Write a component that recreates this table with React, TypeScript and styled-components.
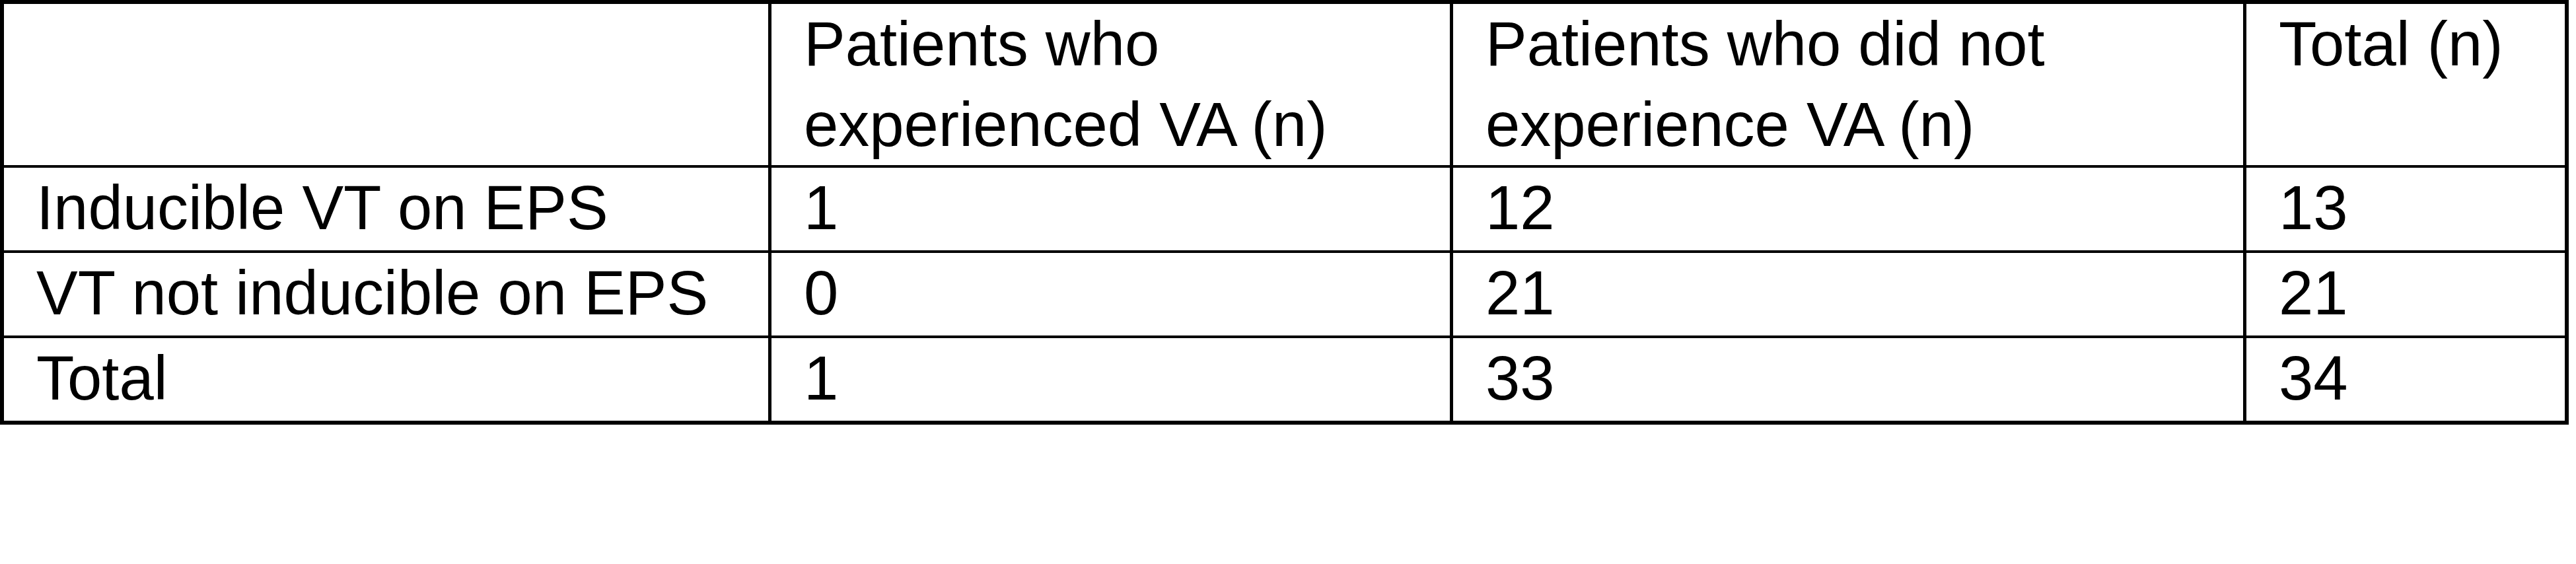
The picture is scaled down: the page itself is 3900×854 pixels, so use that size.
import React from "react";
import styled, { createGlobalStyle } from "styled-components";

const GlobalStyle = createGlobalStyle`
  html, body {
    margin: 0;
    padding: 0;
    background: #ffffff;
  }
  body {
    font-family: "Liberation Sans", Arial, sans-serif;
  }
`;

const Table = styled.div`
  display: grid;
  grid-template-columns: 1157px 1027px 1196px 482px;
  column-gap: 5px;
  row-gap: 4px;
  width: max-content;
  padding: 6px;
  background: #000000;
`;

const Cell = styled.div<{ $header?: boolean }>`
  background: #ffffff;
  color: #000000;
  font-family: "Liberation Sans", Arial, sans-serif;
  font-size: 94px;
  line-height: 122px;
  padding: 0 20px ${(p) => (p.$header ? "0" : "3px")} 49px;
  min-height: ${(p) => (p.$header ? "244px" : "122px")};
  white-space: pre-line;
`;

const header = [
  "",
  "Patients who\nexperienced VA (n)",
  "Patients who did not\nexperience VA (n)",
  "Total (n)",
];

const rows = [
  ["Inducible VT on EPS", "1", "12", "13"],
  ["VT not inducible on EPS", "0", "21", "21"],
  ["Total", "1", "33", "34"],
];

export default function App() {
  return (
    <>
      <GlobalStyle />
      <Table role="table">
        {header.map((h, i) => (
          <Cell key={`h${i}`} $header role="columnheader">
            {h}
          </Cell>
        ))}
        {rows.map((r, ri) =>
          r.map((c, ci) => (
            <Cell key={`r${ri}c${ci}`} role="cell">
              {c}
            </Cell>
          ))
        )}
      </Table>
    </>
  );
}
